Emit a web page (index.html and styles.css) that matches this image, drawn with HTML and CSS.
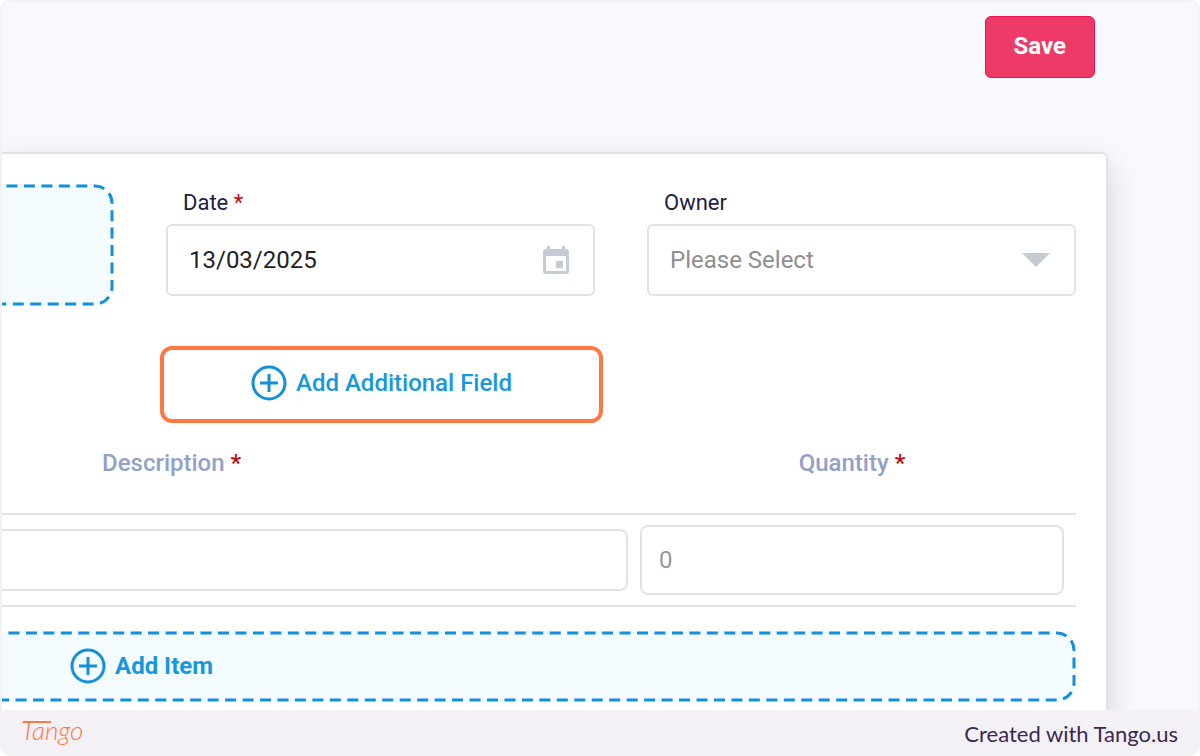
FILE: index.html
```html
<!DOCTYPE html>
<html lang="en">

<head>
    <meta charset="UTF-8">
    <meta name="viewport" content="width=device-width, initial-scale=1.0">
    <title>Add Additional Field</title>
    <link rel="stylesheet" href="styles.css">
</head>

<body>

    <div class="frame">
        <main class="screen">
            <!-- Top bar with the save action -->
            <div class="toolbar">
                <button type="submit" form="orderForm" class="save-button">Save</button>
            </div>

            <form id="orderForm" class="card">
                <div class="fields">
                    <div class="upload dashed">
                        <svg class="dashes dashes-upload" aria-hidden="true">
                            <rect x="-20" y="2" rx="17" />
                        </svg>
                    </div>

                    <div class="field">
                        <label for="date">Date <span class="required">*</span></label>
                        <div class="control">
                            <input type="text" id="date" name="date" value="13/03/2025" required>
                            <svg class="calendar" viewBox="0 0 26 28" aria-hidden="true">
                                <path fill-rule="evenodd" d="M4 0h3v3h12V0h3v3h1a3 3 0 0 1 3 3v19a3 3 0 0 1-3 3H3a3 3 0 0 1-3-3V6a3 3 0 0 1 3-3h1zM3 10v15h20V10zM13 15h7v7h-7z" />
                            </svg>
                        </div>
                    </div>

                    <div class="field">
                        <label for="owner">Owner</label>
                        <div class="control">
                            <select id="owner" name="owner">
                                <option>Please Select</option>
                            </select>
                            <svg class="arrow" viewBox="0 0 28 14" aria-hidden="true">
                                <path d="M0 0h28L14 14z" />
                            </svg>
                        </div>
                    </div>

                    <button type="button" class="add-field">
                        <svg class="plus" viewBox="0 0 36 36" aria-hidden="true">
                            <circle cx="18" cy="18" r="16" />
                            <path d="M18 9v18M9 18h18" />
                        </svg>
                        Add Additional Field
                    </button>
                </div>

                <!-- Line items -->
                <table class="items">
                    <thead>
                        <tr>
                            <th class="description" id="descriptionHead">Description <span class="required">*</span></th>
                            <th class="quantity" id="quantityHead">Quantity <span class="required">*</span></th>
                        </tr>
                    </thead>
                    <tbody>
                        <tr>
                            <td class="description"><input type="text" name="description" aria-labelledby="descriptionHead"></td>
                            <td class="quantity"><input type="text" name="quantity" placeholder="0" aria-labelledby="quantityHead"></td>
                        </tr>
                    </tbody>
                </table>

                <button type="button" class="add-item dashed">
                    <svg class="dashes dashes-item" aria-hidden="true">
                        <rect x="-20" y="2" rx="17" />
                    </svg>
                    <span class="add-item-label">
                        <svg class="plus" viewBox="0 0 36 36" aria-hidden="true">
                            <circle cx="18" cy="18" r="16" />
                            <path d="M18 9v18M9 18h18" />
                        </svg>
                        Add Item
                    </span>
                </button>
            </form>
        </main>

        <footer class="footer">
            <svg class="logo" viewBox="0 0 72 38" role="img" aria-label="Tango">
                <text x="1" y="26">Tango</text>
                <path d="M3 8h28" />
            </svg>
            <span>Created with Tango.us</span>
        </footer>
    </div>

</body>

</html>
```

FILE: styles.css
```css
* {
    box-sizing: border-box;
}

body {
    margin: 0;
    background: #fff;
    font-family: Roboto, "Liberation Sans", sans-serif;
    font-size: 24px;
    color: #222;
}

input,
select,
button {
    font: inherit;
    margin: 0;
}

button {
    cursor: pointer;
}

/* Rounded frame round the screen, the footer is part of it */
.frame {
    display: flex;
    flex-direction: column;
    height: 100vh;
    padding: 2px 2px 0;
    background: #f3f0f6;
    border-radius: 10px;
    overflow: hidden;
}

.screen {
    flex: 1;
    min-height: 0;
    padding-right: 90px;
    background: #f7f9fe;
    border-radius: 8px 8px 0 0;
    overflow: hidden;
}

.toolbar {
    display: flex;
    justify-content: flex-end;
    padding: 14px 13px 74px 0;
}

.save-button {
    padding: 0 28px 2px;
    height: 62px;
    border: 1px solid #e8104f;
    border-radius: 6px;
    background: #ee3a67;
    color: #fff;
    font-weight: 700;
}

.card {
    padding: 30px 30px 30px 0;
    border: 2px solid #e2e2e4;
    border-left: 0;
    border-radius: 0 6px 0 0;
    background: #fff;
    box-shadow: 0 12px 30px rgba(0, 0, 0, 0.16);
}

/* Date, owner and the button for more fields */
.fields {
    display: grid;
    grid-template-columns: 112px 1fr 1fr;
    column-gap: 52px;
    row-gap: 40px;
    align-items: start;
}

.field label {
    display: block;
    padding: 2px 0 0 17px;
    margin-bottom: 4px;
    font-size: 22px;
    line-height: 34px;
    color: #1f2140;
}

.required {
    color: #c00a12;
}

/* Children of these share one cell, so icons sit on the control */
.control,
.dashed {
    display: grid;
}

.control > *,
.dashed > * {
    grid-area: 1 / 1;
}

.control {
    align-items: center;
}

.control input,
.control select {
    width: 100%;
    height: 72px;
    padding: 0 21px;
    border: 2px solid #e2e2e4;
    border-radius: 6px;
    background: #fff;
    color: #222;
    appearance: none;
}

.control select {
    color: #8f8f8f;
}

.calendar,
.arrow {
    justify-self: end;
    margin-right: 26px;
    fill: #c5cad3;
    pointer-events: none;
}

.calendar {
    width: 26px;
    height: 28px;
}

.arrow {
    width: 28px;
    height: 14px;
}

.upload {
    height: 122px;
}

/* Dashed outline, open on the left side */
.dashed {
    border: 0;
    border-radius: 0 18px 18px 0;
    background: #f3fbff;
}

.dashes {
    width: 100%;
    height: 100%;
}

.dashes rect {
    width: calc(100% + 18px);
    height: calc(100% - 4px);
    fill: none;
    stroke: #1490d8;
    stroke-width: 3;
    stroke-dasharray: 11 6.46;
}

.dashes-upload rect {
    stroke-dashoffset: 10;
}

.dashes-item rect {
    stroke-dashoffset: 8;
}

.plus {
    width: 36px;
    height: 36px;
    fill: none;
    stroke: #1490d8;
    stroke-width: 3;
}

.add-field {
    grid-column: 2;
    display: flex;
    align-items: center;
    justify-content: center;
    gap: 9px;
    height: 77px;
    padding-bottom: 4px;
    margin: 0 -8px 0 -6px;
    border: 4px solid #ff7742;
    border-radius: 12px;
    background: #fff;
    color: #1898dc;
    font-weight: 500;
}

.items {
    width: 100%;
    margin-bottom: 24px;
    border-collapse: collapse;
    table-layout: fixed;
}

.items th {
    height: 91px;
    padding: 0 0 11px;
    border-bottom: 2px solid #e2e2e4;
    color: #93a1c8;
    font-weight: 500;
}

.items td {
    height: 92px;
    padding: 0;
    border-bottom: 2px solid #e2e2e4;
}

.items .quantity {
    width: 448px;
    padding-left: 12px;
    padding-right: 12px;
}

.items th.description {
    padding-left: 100px;
    text-align: left;
}

.items input {
    display: block;
    width: 100%;
    height: 70px;
    padding: 0 17px;
    border: 2px solid #e2e2e4;
    border-radius: 8px;
    background: #fff;
}

.items .description input {
    height: 62px;
    border-left: 0;
    border-radius: 0 8px 8px 0;
}

.items input::placeholder {
    color: #999;
}

.add-item {
    width: 100%;
    height: 71px;
    padding: 0;
    color: #1898dc;
    font-weight: 700;
}

.add-item-label {
    display: flex;
    align-items: center;
    gap: 9px;
    padding: 0 0 2px 68px;
}

.footer {
    display: flex;
    align-items: center;
    justify-content: space-between;
    height: 46px;
    padding: 0 20px 0 18px;
    color: #3c2850;
    font-family: Lato, "Liberation Sans", sans-serif;
    font-size: 22px;
}

.logo {
    width: 72px;
    height: 38px;
    fill: #ff7742;
    stroke: #ff7742;
    stroke-width: 0;
    font-size: 26px;
    font-style: italic;
    font-weight: 300;
}

.logo path {
    stroke-width: 2;
}
```
